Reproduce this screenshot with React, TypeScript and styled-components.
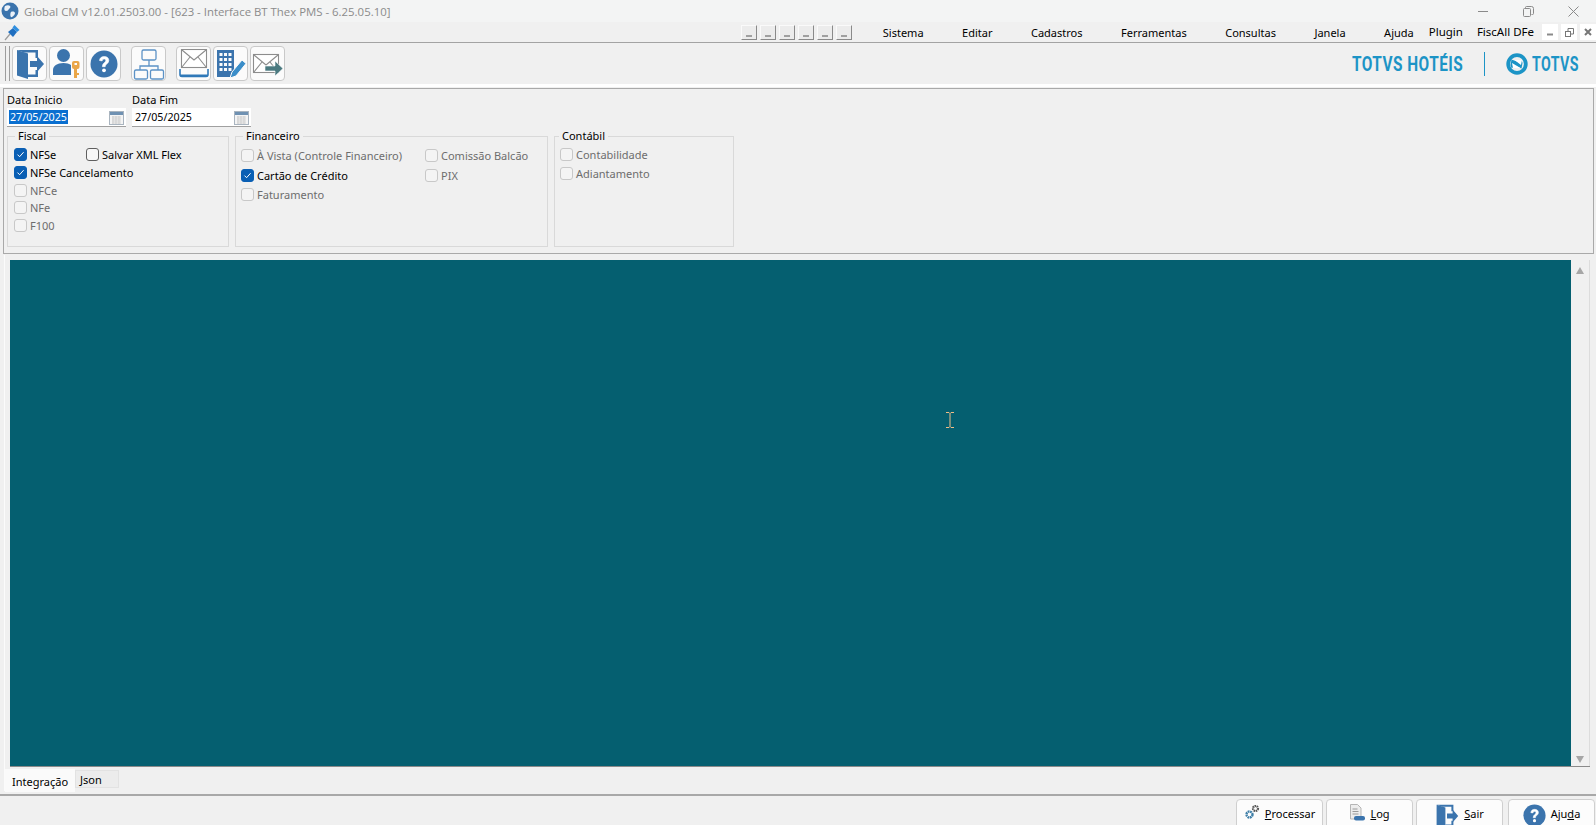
import { createGlobalStyle } from "styled-components";
import styled from "styled-components";
import type { ReactNode } from "react";

const GlobalStyle = createGlobalStyle`
  html, body { margin: 0; padding: 0; height: 100%; overflow: hidden; }
  body { font-family: "Noto Sans", "Open Sans", sans-serif; font-size: 11px; color: #000; background: #f0f0f0; }
  #root { height: 100%; }
`;

const Window = styled.div`
  height: 825px;
  display: flex;
  flex-direction: column;
  background: #f0f0f0;
  overflow: hidden;
`;

const TitleBar = styled.div`
  height: 22px;
  flex: none;
  display: flex;
  align-items: center;
  padding-left: 1px;
  gap: 5px;
  background: #f3f4f4;
`;

const TitleText = styled.span`
  font-family: "Open Sans", sans-serif;
  font-size: 11.4px;
  color: #8b8b8b;
  flex: 1;
`;

const WindowControls = styled.div`
  display: flex;
  align-items: center;
  gap: 34px;
  padding-right: 17px;
  color: #8a8a8a;
`;

const MenuBar = styled.div`
  height: 20px;
  flex: none;
  display: flex;
  align-items: center;
  padding-left: 4px;
  background: #f0f0f0;
  border-bottom: 1px solid #a3a3a3;
`;

const MiniButtons = styled.div`
  display: flex;
  gap: 3px;
  margin-left: auto;
  margin-right: 31px;
`;

const MiniButton = styled.div`
  width: 16px;
  height: 15px;
  box-sizing: border-box;
  background: #ececec;
  border: 1px solid;
  border-color: #fafafa #8a8a8a #8a8a8a #fafafa;
  display: flex;
  align-items: flex-end;
  justify-content: center;
  padding-bottom: 2px;
  &::after { content: ""; width: 6px; height: 2px; background: #a0a0a0; }
`;

const MenuItems = styled.div`
  display: flex;
  gap: 38.5px;
  font-size: 11px;
  margin-right: 15px;
`;

const PluginItems = styled.div`
  display: flex;
  gap: 14px;
  font-size: 11.5px;
  margin-top: -2px;
`;

const MdiControls = styled.div`
  display: flex;
  gap: 3px;
  margin-left: 8px;
`;

const MdiButton = styled.div`
  width: 16px;
  height: 16px;
  background: #fff;
  display: flex;
  align-items: center;
  justify-content: center;
`;

const ToolBar = styled.div`
  height: 41px;
  flex: none;
  display: flex;
  align-items: center;
  background: #f0f0f0;
  padding-left: 5px;
`;

const Grip = styled.div`
  width: 3px;
  height: 35px;
  border-left: 1px solid #9c9c9c;
  border-right: 1px solid #9c9c9c;
  margin-right: 2px;
`;

const ToolButton = styled.button<{ $gapLeft?: number }>`
  width: 35px;
  height: 35px;
  padding: 0;
  margin-left: ${(p) => p.$gapLeft ?? 2}px;
  display: flex;
  align-items: center;
  justify-content: center;
  background: #fbfbfb;
  border: 1px solid #c9c9c9;
  border-radius: 4px;
`;

const Brand = styled.div`
  margin-left: auto;
  display: flex;
  align-items: center;
  padding-right: 18px;
  font-family: Roboto, sans-serif;
  font-weight: 700;
  font-size: 20px;
  letter-spacing: 0.03em;
  color: #1c94c6;
`;

const BrandWord = styled.div<{ $width: number; $scale: number }>`
  width: ${(p) => p.$width}px;
  white-space: nowrap;
  & > span {
    display: inline-block;
    transform: scaleX(${(p) => p.$scale});
    transform-origin: left center;
  }
`;

const BrandDivider = styled.div`
  width: 1px;
  height: 24px;
  background: #1c94c6;
  margin: 0 21px;
`;

const BrandMark = styled.div`
  display: flex;
  align-items: center;
  gap: 4px;
`;

const WhiteStrip = styled.div`
  height: 3px;
  flex: none;
  background: #fff;
`;

const FilterPanel = styled.div`
  height: 166px;
  box-sizing: border-box;
  flex: none;
  margin: 1px 2px 0 3px;
  padding: 0 0 0 3px;
  border: 1px solid #a9a9a9;
  background: #f0f0f0;
  display: flex;
  flex-direction: column;
`;

const DateRow = styled.div`
  display: flex;
  gap: 6px;
  height: 38px;
`;

const DateField = styled.div`
  width: 119px;
  display: flex;
  flex-direction: column;
  justify-content: flex-end;
`;

const DateLabel = styled.label`
  font-size: 11px;
  line-height: 13px;
  margin-bottom: 2px;
`;

const DateBox = styled.div`
  height: 19px;
  box-sizing: border-box;
  background: #fff;
  border-bottom: 1px solid #a0a0a0;
  display: flex;
  align-items: center;
  justify-content: space-between;
  padding: 0 2px;
`;

const DateText = styled.span<{ $selected?: boolean }>`
  font-size: 10.7px;
  line-height: 14px;
  padding: 0 1px;
  background: ${(p) => (p.$selected ? "#0a6fd0" : "transparent")};
  color: ${(p) => (p.$selected ? "#fff" : "#000")};
`;

const Groups = styled.div`
  display: flex;
  gap: 6px;
  margin-top: 9px;
`;

const Group = styled.fieldset<{ $width: number; $inset?: number }>`
  width: ${(p) => p.$width}px;
  height: 118px;
  box-sizing: border-box;
  margin: -7px 0 0 0;
  padding: 0 0 0 ${(p) => p.$inset ?? 6}px;
  border: 1px solid #d9d9d9;
  min-inline-size: 0;
`;

const GroupTitle = styled.legend<{ $offset?: number }>`
  font-size: 11px;
  line-height: 14px;
  padding: 0 3px;
  margin-left: ${(p) => p.$offset ?? 1}px;
`;

const CheckGrid = styled.div<{ $columns: string; $rows: string; $top: number }>`
  display: grid;
  grid-template-columns: ${(p) => p.$columns};
  grid-auto-rows: ${(p) => p.$rows};
  margin-top: ${(p) => p.$top}px;
`;

const CheckRow = styled.div<{ $disabled?: boolean }>`
  display: flex;
  align-items: center;
  gap: 3px;
  font-size: 11px;
  white-space: nowrap;
  color: ${(p) => (p.$disabled ? "#6d6d6d" : "#000")};
`;

const CheckBox = styled.span<{ $state: "on" | "off" | "disabled" }>`
  width: 13px;
  height: 13px;
  flex: none;
  box-sizing: border-box;
  border-radius: 3px;
  display: flex;
  align-items: center;
  justify-content: center;
  background: ${(p) => (p.$state === "on" ? "#0a5fb4" : p.$state === "off" ? "#f7f7f7" : "#f4f4f4")};
  border: 1px solid
    ${(p) => (p.$state === "on" ? "#0a5fb4" : p.$state === "off" ? "#5f5f5f" : "#c8c8c8")};
`;

const ContentArea = styled.div`
  height: 536px;
  flex: none;
  margin: 1px 6px 0 4px;
  box-sizing: border-box;
  padding: 5px 0 0 5px;
  background: #f0f0f0;
  border-left: 1px solid #fbfbfb;
  display: flex;
  flex-direction: column;
`;

const ContentRow = styled.div`
  height: 506px;
  flex: none;
  display: flex;
  border-bottom: 1px solid #8a8a8a;
`;

const TealPane = styled.div`
  flex: 1;
  position: relative;
  background: #055f70;
`;

const TextCursor = styled.svg`
  position: absolute;
  left: 936px;
  top: 152px;
`;

const ScrollBar = styled.div`
  width: 19px;
  flex: none;
  display: flex;
  flex-direction: column;
  justify-content: space-between;
  align-items: center;
  padding: 7px 0 3px;
  box-sizing: border-box;
  background: #f0f0f0;
  border-right: 1px solid #dcdcdc;
`;

const Arrow = styled.div<{ $up?: boolean }>`
  width: 0;
  height: 0;
  border-left: 4px solid transparent;
  border-right: 4px solid transparent;
  ${(p) => (p.$up ? "border-bottom: 7px solid #a6a6a6;" : "border-top: 7px solid #a6a6a6;")}
`;

const Tabs = styled.div`
  display: flex;
  height: 25px;
  margin-left: -5px;
  padding-top: 2px;
  box-sizing: border-box;
  align-items: flex-start;
  font-size: 11px;
`;

const Tab = styled.div<{ $active?: boolean }>`
  height: ${(p) => (p.$active ? 23 : 18)}px;
  box-sizing: border-box;
  padding: ${(p) => (p.$active ? "5px 7px 0 7px" : "1px 16px 0 4px")};
  margin-top: ${(p) => (p.$active ? 0 : 1)}px;
  background: ${(p) => (p.$active ? "#fafafa" : "#ececec")};
  border: ${(p) => (p.$active ? "none" : "1px solid #e2e2e2")};
`;

const Divider = styled.div`
  height: 2px;
  flex: none;
  margin-top: 3px;
  background: #a8a8a8;
`;

const FooterBar = styled.div`
  flex: 1;
  display: flex;
  justify-content: flex-end;
  gap: 3px;
  padding: 3px 1px 0 0;
`;

const FooterButton = styled.button<{ $gapLeft?: number }>`
  width: 87px;
  height: 32px;
  flex: none;
  margin-left: ${(p) => p.$gapLeft ?? 0}px;
  display: flex;
  align-items: flex-start;
  justify-content: center;
  gap: 5px;
  padding: 4px 0 0;
  background: #fcfcfc;
  border: 1px solid #cfcfcf;
  border-radius: 4px;
  font-family: inherit;
  font-size: 11px;
  line-height: 20px;
  color: #000;
`;

const Key = styled.span`
  text-decoration: underline;
`;

const Check = () => (
  <svg width="9" height="9" viewBox="0 0 9 9">
    <path d="M1.5 4.6 3.6 6.7 7.6 2.2" fill="none" stroke="#fff" strokeWidth="1" />
  </svg>
);

const Option = ({ label, state, children }: { label?: string; state: "on" | "off" | "disabled"; children?: ReactNode }) => (
  <CheckRow $disabled={state === "disabled"}>
    <CheckBox $state={state}>{state === "on" && <Check />}</CheckBox>
    {label}
    {children}
  </CheckRow>
);

const DoorIcon = ({ size = 30 }: { size?: number }) => (
  <svg width={size} height={size} viewBox="0 0 30 30">
    <path d="M2 1h21v8h-2.500V3.500H9L2 1zM20.500 21H23v7H13v-2.500h7.500z" fill="#3b74ad" />
    <path d="M2 1l11 3.500V30L2 26.500z" fill="#3b74ad" />
    <path d="M15 12h7V7l7 8-7 8v-5h-7z" fill="#3b74ad" />
  </svg>
);

const UserKeyIcon = () => (
  <svg width="31" height="31" viewBox="0 0 31 31">
    <circle cx="12.500" cy="7.500" r="6.500" fill="#3b74ad" />
    <path d="M2 27v-5c0-4 4-7 10.500-7 3 0 6 .7 7.500 2v10z" fill="#3b74ad" />
    <rect x="21" y="13" width="7.500" height="8" rx="2" fill="#eaa648" />
    <rect x="23" y="20" width="3" height="10" fill="#eaa648" />
    <rect x="25.500" y="25" width="2.500" height="2" fill="#eaa648" />
    <rect x="23.500" y="15" width="2.500" height="2" fill="#fbfbfb" />
  </svg>
);

const HelpIcon = ({ size = 28 }: { size?: number }) => (
  <svg width={size} height={size} viewBox="0 0 28 28">
    <circle cx="14" cy="14" r="13.500" fill="#3b74ad" />
    <path
      d="M9.500 10.500c.3-2.500 2-4 4.700-4 2.800 0 4.600 1.600 4.600 3.900 0 3.300-3.600 3.400-3.600 6.300h-2.800c0-3.900 3.400-4 3.400-6.100 0-1-.7-1.600-1.700-1.600-1.100 0-1.800.7-1.900 1.900z"
      fill="#fff"
      stroke="#fff"
      strokeWidth=".6"
    />
    <circle cx="14" cy="20.300" r="1.900" fill="#fff" />
  </svg>
);

const OrgChartIcon = () => (
  <svg width="32" height="32" viewBox="0 0 32 32" fill="none" stroke="#5c92c6" strokeWidth="1.300">
    <rect x="9" y="2" width="14" height="10" rx="1.500" />
    <path d="M16 12v6M7 22v-4h18v4" />
    <rect x="1.500" y="22" width="13" height="9" rx="1.500" />
    <rect x="17.500" y="22" width="13" height="9" rx="1.500" />
  </svg>
);

const Envelope = ({ x = 0, y = 0 }: { x?: number; y?: number }) => (
  <g transform={`translate(${x} ${y})`} fill="#fff" stroke="#8d8d8d" strokeWidth="1.100">
    <rect x="0.500" y="0.500" width="25" height="18" />
    <path d="M1 1l12 10L25 1M1 18l8-10M25 18l-8-10" fill="none" />
  </g>
);

const MailTrayIcon = () => (
  <svg width="32" height="30" viewBox="0 0 32 30">
    <Envelope x={3} y={0} />
    <path d="M2 20v5.500a2 2 0 0 0 2 2h24a2 2 0 0 0 2-2V20" fill="none" stroke="#2f78b8" strokeWidth="1.600" />
    <path d="M2 26.500h28" stroke="#2f78b8" strokeWidth="2" />
  </svg>
);

const BuildingPenIcon = () => (
  <svg width="32" height="32" viewBox="0 0 32 32">
    <path d="M2 2h17v27H2z" fill="#3b74ad" />
    {[5, 10, 15, 20].map((y) =>
      [4.5, 9, 13.5].map((x) => <rect key={`${x}-${y}`} x={x} y={y} width="3" height="3" fill="#fbfbfb" />)
    )}
    <path d="M15 30l2-6L27 12l4 3.500L21 28z" fill="#3b8ec9" stroke="#fbfbfb" strokeWidth="1" />
  </svg>
);

const MailSendIcon = () => (
  <svg width="33" height="30" viewBox="0 0 33 30">
    <Envelope x={2} y={5} />
    <path d="M14 17h10v-5l8 7.500-8 7.500v-5H14z" fill="#4b7a80" stroke="#fbfbfb" strokeWidth=".6" />
  </svg>
);

const GearsIcon = () => (
  <svg width="16" height="16" viewBox="0 0 16 16">
    <circle cx="5.500" cy="10.500" r="3" fill="none" stroke="#3f7fa8" strokeWidth="2.400" strokeDasharray="1.800 .6" />
    <circle cx="11.500" cy="4.500" r="2.500" fill="none" stroke="#555" strokeWidth="2.200" strokeDasharray="1.500 .6" />
  </svg>
);

const LogIcon = () => (
  <svg width="16" height="17" viewBox="0 0 16 17">
    <path d="M1.500 .5h7l3.500 3.500v11h-10.500z" fill="#ededed" stroke="#b5b5b5" />
    <path d="M3.500 5h5M3.500 7.500h6M3.500 10h6" stroke="#9a9a9a" strokeWidth="1" />
    <rect x="5" y="12" width="11" height="4.500" rx="2" fill="#3b74ad" />
  </svg>
);

const GlobeIcon = () => (
  <svg width="18" height="18" viewBox="0 0 18 18">
    <circle cx="9" cy="9" r="8.500" fill="#3b74ad" />
    <path d="M4 4c2-1 4-1 5 0s0 2-1 3-1 2-3 2-2-3-1-5zM10 10c2-1 4 0 4 1s-1 3-3 4-2-4-1-5z" fill="#eaf1f8" />
  </svg>
);

const PinIcon = () => (
  <svg width="17" height="17" viewBox="0 0 17 17">
    <path d="M1 16l5-6" stroke="#9a9a9a" strokeWidth="1.200" />
    <path d="M4 8l5-4 4 4-4 5z" fill="#1f6fc0" />
    <path d="M8.500 3.500l2-2.500 5 5-2.500 2z" fill="#2f8fe0" />
  </svg>
);

const CalendarIcon = () => (
  <svg width="15" height="15" viewBox="0 0 15 15">
    <rect x=".5" y="1.500" width="14" height="13" fill="#f4f4f4" stroke="#a9b4bf" />
    <rect x="1" y="2" width="13" height="3" fill="#6f91b2" />
    <path d="M3 7h9M3 9h9M3 11h9M3 13h9M4 6v8M7 6v8M10 6v8" stroke="#c4c4c4" strokeWidth=".7" />
  </svg>
);

const TotvsMark = () => (
  <svg width="22" height="22" viewBox="0 0 22 22">
    <circle cx="11" cy="11" r="8.800" fill="none" stroke="#1c94c6" strokeWidth="3.800" />
    <path d="M5.500 6.500l5.500 2 4.500-1.500 1 3-1 5.500-5-2-5 1.500-1-3z" fill="#1c94c6" />
    <path d="M8.500 7h7.500l-1 5zM6 10l1 5h7.500z" fill="#fff" />
  </svg>
);

export default function App() {
  return (
    <Window>
      <GlobalStyle />
      <TitleBar>
        <GlobeIcon />
        <TitleText>Global CM v12.01.2503.00 - [623 - Interface BT Thex PMS - 6.25.05.10]</TitleText>
        <WindowControls>
          <svg width="11" height="11" viewBox="0 0 11 11">
            <path d="M0 5.500h10" stroke="#8a8a8a" />
          </svg>
          <svg width="11" height="11" viewBox="0 0 11 11" fill="none" stroke="#8a8a8a">
            <rect x=".5" y="2.500" width="7" height="8" rx="1" />
            <path d="M2.500 2.500v-1a1 1 0 0 1 1-1h5a2 2 0 0 1 2 2v5a1 1 0 0 1-1 1h-1" />
          </svg>
          <svg width="11" height="11" viewBox="0 0 11 11">
            <path d="M.5.500l10 10M10.500.500l-10 10" stroke="#8a8a8a" />
          </svg>
        </WindowControls>
      </TitleBar>
      <MenuBar>
        <PinIcon />
        <MiniButtons>
          {Array.from({ length: 6 }, (_, i) => (
            <MiniButton key={i} />
          ))}
        </MiniButtons>
        <MenuItems>
          <span>Sistema</span>
          <span>Editar</span>
          <span>Cadastros</span>
          <span>Ferramentas</span>
          <span>Consultas</span>
          <span>Janela</span>
          <span>Ajuda</span>
        </MenuItems>
        <PluginItems>
          <span>Plugin</span>
          <span>FiscAll DFe</span>
        </PluginItems>
        <MdiControls>
          <MdiButton>
            <svg width="8" height="8" viewBox="0 0 8 8">
              <path d="M1 6.500h6" stroke="#8a8a8a" strokeWidth="2" />
            </svg>
          </MdiButton>
          <MdiButton>
            <svg width="9" height="9" viewBox="0 0 9 9" fill="none" stroke="#777">
              <rect x=".5" y="3.500" width="5" height="5" />
              <path d="M3 3V.5h5.500V6H6" />
            </svg>
          </MdiButton>
          <MdiButton>
            <svg width="8" height="8" viewBox="0 0 8 8">
              <path d="M1 1l6 6M7 1l-6 6" stroke="#777" strokeWidth="2" />
            </svg>
          </MdiButton>
        </MdiControls>
      </MenuBar>
      <ToolBar>
        <Grip />
        <ToolButton $gapLeft={0}>
          <DoorIcon />
        </ToolButton>
        <ToolButton>
          <UserKeyIcon />
        </ToolButton>
        <ToolButton>
          <HelpIcon />
        </ToolButton>
        <ToolButton $gapLeft={10}>
          <OrgChartIcon />
        </ToolButton>
        <ToolButton $gapLeft={10}>
          <MailTrayIcon />
        </ToolButton>
        <ToolButton>
          <BuildingPenIcon />
        </ToolButton>
        <ToolButton>
          <MailSendIcon />
        </ToolButton>
        <Brand>
          <BrandWord $width={111} $scale={0.77}>
            <span>TOTVS HOTÉIS</span>
          </BrandWord>
          <BrandDivider />
          <BrandMark>
            <TotvsMark />
            <BrandWord $width={46} $scale={0.71}>
              <span>TOTVS</span>
            </BrandWord>
          </BrandMark>
        </Brand>
      </ToolBar>
      <WhiteStrip />
      <FilterPanel>
        <DateRow>
          <DateField>
            <DateLabel>Data Inicio</DateLabel>
            <DateBox>
              <DateText $selected>27/05/2025</DateText>
              <CalendarIcon />
            </DateBox>
          </DateField>
          <DateField>
            <DateLabel>Data Fim</DateLabel>
            <DateBox>
              <DateText>27/05/2025</DateText>
              <CalendarIcon />
            </DateBox>
          </DateField>
        </DateRow>
        <Groups>
          <Group $width={222}>
            <GroupTitle>Fiscal</GroupTitle>
            <CheckGrid $columns="72px 1fr" $rows="17.700px" $top={3}>
              <Option label="NFSe" state="on" />
              <Option label="Salvar XML Flex" state="off" />
              <Option label="NFSe Cancelamento" state="on" />
              <span />
              <Option label="NFCe" state="disabled" />
              <span />
              <Option label="NFe" state="disabled" />
              <span />
              <Option label="F100" state="disabled" />
            </CheckGrid>
          </Group>
          <Group $width={313} $inset={5}>
            <GroupTitle $offset={2}>Financeiro</GroupTitle>
            <CheckGrid $columns="184px 1fr" $rows="19.500px" $top={3}>
              <Option label="À Vista (Controle Financeiro)" state="disabled" />
              <Option label="Comissão Balcão" state="disabled" />
              <Option label="Cartão de Crédito" state="on" />
              <Option label="PIX" state="disabled" />
              <Option label="Faturamento" state="disabled" />
            </CheckGrid>
          </Group>
          <Group $width={180} $inset={5}>
            <GroupTitle $offset={-1}>Contábil</GroupTitle>
            <CheckGrid $columns="1fr" $rows="19px" $top={2}>
              <Option label="Contabilidade" state="disabled" />
              <Option label="Adiantamento" state="disabled" />
            </CheckGrid>
          </Group>
        </Groups>
      </FilterPanel>
      <ContentArea>
        <ContentRow>
          <TealPane>
            <TextCursor width="8" height="16" viewBox="0 0 8 16">
              <path d="M0 .5h3l1 1 1-1h3M4 1.500v13M0 15.500h3l1-1 1 1h3" fill="none" stroke="#f0bd86" />
            </TextCursor>
          </TealPane>
          <ScrollBar>
            <Arrow $up />
            <Arrow />
          </ScrollBar>
        </ContentRow>
        <Tabs>
          <Tab $active>Integração</Tab>
          <Tab>Json</Tab>
        </Tabs>
      </ContentArea>
      <Divider />
      <FooterBar>
        <FooterButton>
          <GearsIcon />
          <span>
            <Key>P</Key>rocessar
          </span>
        </FooterButton>
        <FooterButton>
          <LogIcon />
          <span>
            <Key>L</Key>og
          </span>
        </FooterButton>
        <FooterButton>
          <DoorIcon size={24} />
          <span>
            <Key>S</Key>air
          </span>
        </FooterButton>
        <FooterButton $gapLeft={2}>
          <HelpIcon size={23} />
          <span>
            Aju<Key>d</Key>a
          </span>
        </FooterButton>
      </FooterBar>
    </Window>
  );
}
